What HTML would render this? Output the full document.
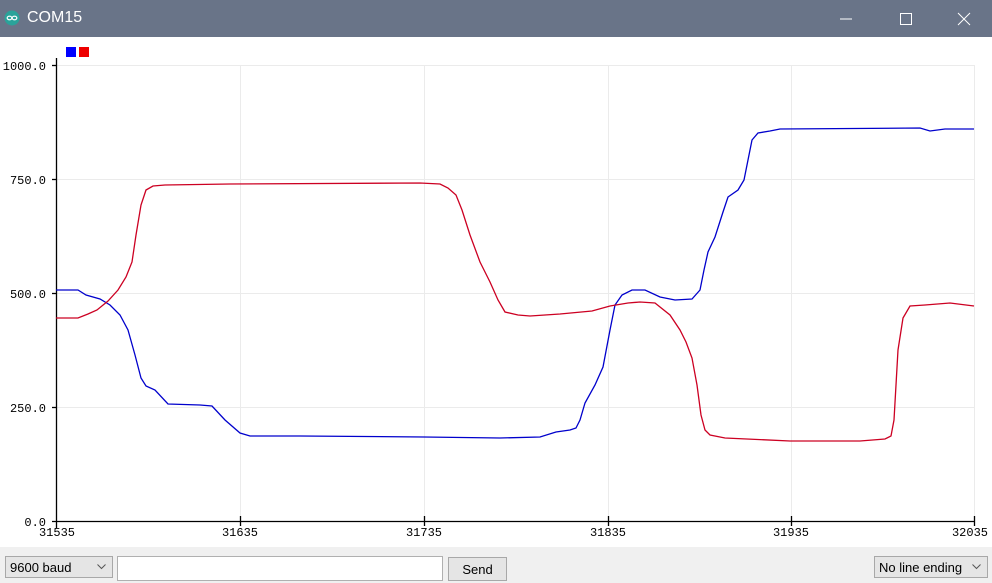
<!DOCTYPE html>
<html><head><style>
html,body{margin:0;padding:0;width:992px;height:583px;overflow:hidden;background:#fff;font-family:"Liberation Sans",sans-serif}
.title{position:absolute;left:0;top:0;width:992px;height:37px;background:#697488;color:#fff;font-size:16px}
.bottom{position:absolute;left:0;top:547px;width:992px;height:36px;background:#f0f0f0}
.sel{position:absolute;top:556px;height:22px;border:1px solid #a8a8a8;background:#e5e5e5;font-size:13px;line-height:21px;padding-left:4px;box-sizing:border-box}
.chev{position:absolute;right:6px;top:7px}
</style></head><body>
<div class="title">
<svg style="position:absolute;left:4px;top:10px" width="16" height="16"><circle cx="8" cy="8" r="7.5" fill="#2aa39a"/><ellipse cx="5.5" cy="8" rx="2.3" ry="1.8" fill="none" stroke="#fff" stroke-width="1.2"/><ellipse cx="10.5" cy="8" rx="2.3" ry="1.8" fill="none" stroke="#fff" stroke-width="1.2"/></svg>
<span style="position:absolute;left:27px;top:9px">COM15</span>
<svg style="position:absolute;left:840px;top:10px" width="140" height="18"><line x1="0" y1="9" x2="12" y2="9" stroke="#fff"/><rect x="60.5" y="3.5" width="11" height="11" fill="none" stroke="#fff"/><line x1="118" y1="3" x2="130" y2="15" stroke="#fff"/><line x1="130" y1="3" x2="118" y2="15" stroke="#fff"/></svg>
</div>
<svg style="position:absolute;left:0;top:37px" width="992" height="510" viewBox="0 37 992 510">
<rect x="66" y="47" width="10" height="10" fill="#0000ff"/><rect x="79" y="47" width="10" height="10" fill="#ee0000"/>
<g stroke="#ebebeb" stroke-width="1">
<line x1="56" y1="65.5" x2="974" y2="65.5"/><line x1="56" y1="179.5" x2="974" y2="179.5"/><line x1="56" y1="293.5" x2="974" y2="293.5"/><line x1="56" y1="407.5" x2="974" y2="407.5"/>
<line x1="240.5" y1="65" x2="240.5" y2="521"/><line x1="424.5" y1="65" x2="424.5" y2="521"/><line x1="608.5" y1="65" x2="608.5" y2="521"/><line x1="791.5" y1="65" x2="791.5" y2="521"/><line x1="974.5" y1="65" x2="974.5" y2="521"/>
</g>
<g stroke="#000" stroke-width="1.3">
<line x1="56.5" y1="58" x2="56.5" y2="528"/><line x1="52" y1="521.5" x2="975" y2="521.5"/>
<line x1="52" y1="65.5" x2="56" y2="65.5"/><line x1="52" y1="179.5" x2="56" y2="179.5"/><line x1="52" y1="293.5" x2="56" y2="293.5"/><line x1="52" y1="407.5" x2="56" y2="407.5"/>
<line x1="240.5" y1="516" x2="240.5" y2="526"/><line x1="424.5" y1="516" x2="424.5" y2="526"/><line x1="608.5" y1="516" x2="608.5" y2="526"/><line x1="791.5" y1="516" x2="791.5" y2="526"/><line x1="974.5" y1="516" x2="974.5" y2="526"/>
</g>
<g font-family="Liberation Mono" font-size="12" fill="#000" text-anchor="end">
<text x="46" y="70">1000.0</text><text x="46" y="184">750.0</text><text x="46" y="298">500.0</text><text x="46" y="412">250.0</text><text x="46" y="526">0.0</text>
</g>
<g font-family="Liberation Mono" font-size="12" fill="#000" text-anchor="middle">
<text x="57" y="536">31535</text><text x="240" y="536">31635</text><text x="424" y="536">31735</text><text x="608" y="536">31835</text><text x="791" y="536">31935</text><text x="970" y="536">32035</text>
</g>
<polyline fill="none" stroke="#0000cc" stroke-width="1.3" points="56,290 66,290 78,290 86,295 100,299 110,305 120,315 128,330 135,355 141,378 146,386 155,390 168,404 200,405 212,406 225,420 240,433 250,436 300,436 424,437 500,438 540,437 556,432 570,430 576,428 580,420 585,403 595,385 603,367 610,330 615,305 622,295 632,290 645,290 660,297 675,300 692,299 700,290 704,270 708,252 715,237 723,212 728,197 738,190 744,180 748,160 752,140 758,133 770,131 780,129 920,128 930,131 945,129 974,129"/>
<polyline fill="none" stroke="#cc0022" stroke-width="1.3" points="56,318 78,318 88,314 97,310 108,301 118,290 126,277 132,262 136,235 141,205 146,190 153,186 165,185 230,184 420,183 440,184 448,188 456,195 462,210 470,235 480,262 490,282 498,300 505,312 518,315 530,316 560,314 592,311 610,306 628,303 640,302 655,303 670,315 680,330 686,342 692,358 697,385 701,415 705,430 710,435 725,438 790,441 860,441 885,439 891,436 894,420 898,350 903,318 910,306 925,305 950,303 974,306"/>
</svg>
<div class="bottom"></div>
<div class="sel" style="left:5px;width:108px">9600 baud<svg class="chev" width="9" height="6"><polyline points="0.5,0.5 4.5,4.5 8.5,0.5" fill="none" stroke="#555"/></svg></div>
<div style="position:absolute;left:117px;top:556px;width:326px;height:25px;border:1px solid #b0b0b0;background:#fff;box-sizing:border-box"></div>
<div class="sel" style="left:448px;top:557px;width:59px;height:24px;text-align:center;padding:0;line-height:23px">Send</div>
<div class="sel" style="left:874px;width:114px">No line ending<svg class="chev" width="9" height="6"><polyline points="0.5,0.5 4.5,4.5 8.5,0.5" fill="none" stroke="#555"/></svg></div>
</body></html>
